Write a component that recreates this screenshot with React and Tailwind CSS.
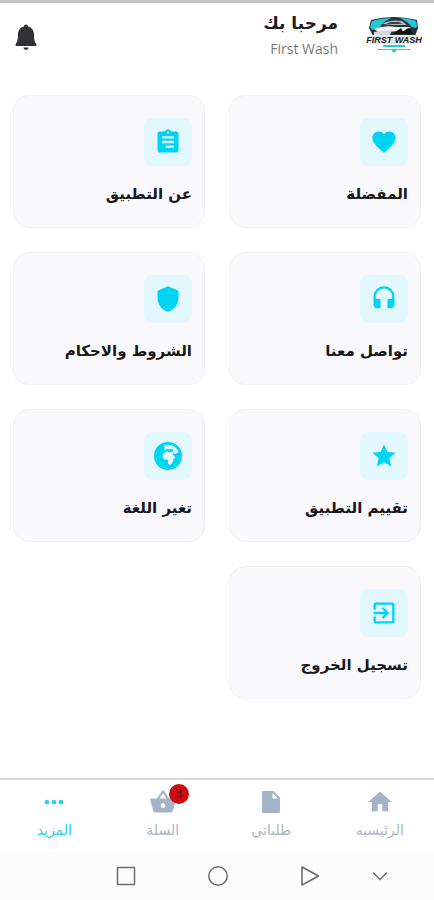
import React from 'react';
import {
  MdAssignment,
  MdExitToApp,
  MdFavorite,
  MdHeadset,
  MdHome,
  MdMoreHoriz,
  MdShield,
  MdShoppingBasket,
  MdStar,
} from 'react-icons/md';
import { FaEarthAfrica } from 'react-icons/fa6';

// ---------------------------------------------------------------------------
// Icons
// ---------------------------------------------------------------------------
const BellIcon = ({ className }) => (
  <svg viewBox="0 0 28 28" className={className} fill="currentColor" aria-hidden="true">
    <path d="M14 1.5 C15.2 1.5 16 2.4 16 3.6 C19.8 4.6 22 7.6 22 11.5 C22 16.5 22.6 18.6 24.4 21.4 C24.8 22.2 24.4 23 23.5 23 H4.5 C3.6 23 3.2 22.2 3.6 21.4 C5.4 18.6 6 16.5 6 11.5 C6 7.6 8.2 4.6 12 3.6 C12 2.4 12.8 1.5 14 1.5 Z" />
    <path d="M11.5 24.5 H16.5 C16.3 26 15.3 26.8 14 26.8 C12.7 26.8 11.7 26 11.5 24.5 Z" />
  </svg>
);

const FileIcon = ({ className }) => (
  <svg viewBox="0 0 28 28" className={className} fill="currentColor" aria-hidden="true">
    <path d="M6 3 H16.5 L23 9.5 V24 Q23 25 22 25 H6 Q5 25 5 24 V4 Q5 3 6 3 Z M15.5 4.8 V10.5 H21.2 Z" fillRule="evenodd" />
  </svg>
);

const Logo = () => (
  <svg viewBox="0 0 56 40" className="h-10 w-14" role="img" aria-label="First Wash">
    <path d="M5 5 Q28 -1 51 5 L52 13 L49 21 H7 L3 13 Z" fill="#263238" />
    <path d="M6 6 Q16 3 25 3 L18 7 L13 13 L6 15 L4 12 Z" fill="#25c9d6" />
    <path d="M50 6 Q41 3 34 3 L41 7 L46 12 L50 13 L51 11 Z" fill="#25c9d6" />
    <path d="M16 9 Q24 4 36 6 L41 10 L27 10 Z" fill="#a9b8bb" />
    <path d="M20 9 L25 7 H33 L36 9 Z" fill="#37474f" />
    <path d="M8 14 Q18 10 30 12 L45 12 L38 16 L12 17 Z" fill="#f2f5f5" />
    <path d="M8 17 L26 15 L24 20 H8 Z" fill="#cfd8dc" />
    <path d="M28 18 L35 13 L37 17 L42 13 L48 19 H28 Z" fill="#111" />
    <path d="M3 20 H53 L52 29 H4 Z" fill="#e5e9e9" />
    <text
      x="28"
      y="28"
      textAnchor="middle"
      fontSize="9"
      fontWeight="700"
      fontStyle="italic"
      fontFamily="Liberation Sans, sans-serif"
      fill="#222"
    >
      FIRST WASH
    </text>
    <path d="M17 31 H39" stroke="#25c9d6" strokeWidth="2" />
    <path d="M11 34.5 H24 M32 34.5 H45" stroke="#90a4ae" strokeWidth="1" />
    <path d="M24 34 H32 L28 38 Z" fill="#25c9d6" />
  </svg>
);

// ---------------------------------------------------------------------------
// Data
// ---------------------------------------------------------------------------
const MENU = [
  { id: 'favorites', label: 'المفضلة',         Icon: MdFavorite },
  { id: 'about',     label: 'عن التطبيق',      Icon: MdAssignment, flip: true },
  { id: 'contact',   label: 'تواصل معنا',      Icon: MdHeadset },
  { id: 'terms',     label: 'الشروط والاحكام', Icon: MdShield },
  { id: 'rate',      label: 'تقييم التطبيق',   Icon: MdStar },
  { id: 'language',  label: 'تغير اللغة',      Icon: FaEarthAfrica },
  { id: 'logout',    label: 'تسجيل الخروج',    Icon: MdExitToApp },
];

const TABS = [
  { id: 'home',   label: 'الرئيسيه', Icon: MdHome },
  { id: 'orders', label: 'طلباتي',   Icon: FileIcon },
  { id: 'cart',   label: 'السلة',    Icon: MdShoppingBasket, badge: 3 },
  { id: 'more',   label: 'المزيد',   Icon: MdMoreHoriz, active: true },
];

// ---------------------------------------------------------------------------
// Components
// ---------------------------------------------------------------------------
const MenuCard = ({ label, Icon, flip }) => (
  <button
    type="button"
    className="flex h-[133px] flex-col items-start rounded-2xl border border-[#f1f1f3] bg-[#f9f9fc] px-3 pt-[22px]"
  >
    <span className="flex size-12 items-center justify-center rounded-lg bg-[#e2f7fe]">
      <Icon className={`size-7 text-[#00d4f3] ${flip ? '-scale-x-100' : ''}`} />
    </span>
    <span className="mt-4 text-[15px] leading-6 font-bold whitespace-nowrap text-[#17171a]">{label}</span>
  </button>
);

const Tab = ({ label, Icon, badge, active }) => (
  <a
    href="#"
    aria-current={active ? 'page' : undefined}
    className={`flex flex-col items-center pt-2 ${active ? 'text-[#1fd3e6]' : 'text-[#a3b4c8]'}`}
  >
    <span className="relative">
      <Icon className="size-7" />
      {badge && (
        <span className="absolute -top-1 -right-3 flex size-5 items-center justify-center rounded-full bg-[#c90f14] text-xs text-[#5e0a0c]">
          {badge}
        </span>
      )}
    </span>
    <span className={`mt-1 text-sm leading-5 ${active ? '' : 'text-[#b0b6bf]'}`}>{label}</span>
  </a>
);

const SystemBar = () => (
  <div dir="ltr" className="flex h-12 items-center justify-end bg-[#fcfcfc] pr-[46px] text-[#6b6b6b]">
    <div className="flex flex-1 items-center justify-end gap-[72px]">
      <button type="button" aria-label="Recent apps">
        <svg viewBox="0 0 20 20" className="size-5" fill="none" stroke="currentColor" strokeWidth="1.5">
          <rect x="1.5" y="1.5" width="17" height="17" rx="0.5" />
        </svg>
      </button>
      <button type="button" aria-label="Home">
        <svg viewBox="0 0 20 20" className="size-5" fill="none" stroke="currentColor" strokeWidth="1.5">
          <circle cx="10" cy="10" r="9.2" />
        </svg>
      </button>
      <button type="button" aria-label="Back">
        <svg viewBox="0 0 20 20" className="size-5" fill="none" stroke="currentColor" strokeWidth="1.5" strokeLinejoin="round">
          <path d="M2 1 L18.5 10 L2 19 Z" />
        </svg>
      </button>
    </div>
    <button type="button" aria-label="Hide keyboard" className="ml-[52px]">
      <svg viewBox="0 0 16 16" className="size-4" fill="none" stroke="currentColor" strokeWidth="1.5">
        <path d="M1 4.5 L8 11.5 L15 4.5" />
      </svg>
    </button>
  </div>
);

// ---------------------------------------------------------------------------
// App
// ---------------------------------------------------------------------------
export default function App() {
  return (
    <div dir="rtl" className="flex min-h-screen flex-col border-t-3 border-[#c2c2c2] bg-white font-['DejaVu_Sans',sans-serif]">
      <header className="flex items-start justify-between px-3 pt-2">
        <div className="flex items-start gap-7">
          <div className="pt-1">
            <Logo />
          </div>
          <div>
            <h1 className="text-[17px] leading-6 font-bold text-[#1d1d1f]">مرحبا بك</h1>
            <p className="mt-1 text-right font-['Open_Sans',sans-serif] text-sm leading-5 text-[#7a7a7a]">First Wash</p>
          </div>
        </div>
        <button type="button" aria-label="Notifications" className="pt-3">
          <BellIcon className="size-7 text-[#2e3238]" />
        </button>
      </header>

      <main className="flex-1 px-[13px] pt-9">
        <div className="grid grid-cols-2 gap-x-6 gap-y-6">
          {MENU.map((item) => (
            <MenuCard key={item.id} {...item} />
          ))}
        </div>
      </main>

      <nav className="grid h-[74px] grid-cols-4 border-t-2 border-[#d9d9d9]">
        {TABS.map((tab) => (
          <Tab key={tab.id} {...tab} />
        ))}
      </nav>
      <SystemBar />
    </div>
  );
}
